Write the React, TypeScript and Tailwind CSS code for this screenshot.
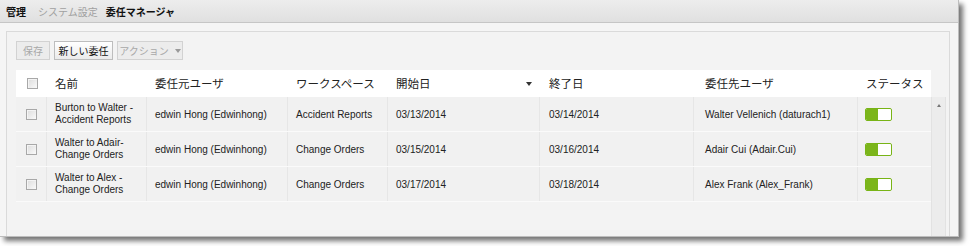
import React from 'react';

type Row = {
  name: [string, string];
  from: string;
  workspace: string;
  start: string;
  end: string;
  to: string;
};

const rows: Row[] = [
  {
    name: ['Burton to Walter -', 'Accident Reports'],
    from: 'edwin Hong (Edwinhong)',
    workspace: 'Accident Reports',
    start: '03/13/2014',
    end: '03/14/2014',
    to: 'Walter Vellenich (daturach1)',
  },
  {
    name: ['Walter to Adair-', 'Change Orders'],
    from: 'edwin Hong (Edwinhong)',
    workspace: 'Change Orders',
    start: '03/15/2014',
    end: '03/16/2014',
    to: 'Adair Cui (Adair.Cui)',
  },
  {
    name: ['Walter to Alex -', 'Change Orders'],
    from: 'edwin Hong (Edwinhong)',
    workspace: 'Change Orders',
    start: '03/17/2014',
    end: '03/18/2014',
    to: 'Alex Frank (Alex_Frank)',
  },
];

const jp = "font-['Noto_Sans_CJK_JP','Liberation_Sans',sans-serif]";
const latin = "font-['Liberation_Sans','Noto_Sans_CJK_JP',sans-serif]";

const Checkbox = () => (
  <div className="w-[11px] h-[11px] border border-[#a8a8a8] bg-gradient-to-br from-[#dcdcdc] to-[#fafafa] shadow-[inset_1px_1px_0_#f4f4f4]" />
);

const Toggle = () => (
  <div className="flex w-[27px] h-[13px] border border-[#78b416] rounded-[2px] overflow-hidden bg-white">
    <div className="w-[12px] h-full bg-[#7bb51b]" />
    <div className="flex-1 h-full bg-white rounded-[2px]" />
  </div>
);

// cell widths in px
const cols = ['w-[31px]', 'w-[100px]', 'w-[141px]', 'w-[100px]', 'w-[152px]', 'w-[154px]', 'w-[164px]', 'w-[73px]'];

const App: React.FC = () => {
  return (
    <div className="w-[971px] h-[246px] bg-white">
      <div className="w-[959px] h-[237px] flex flex-col bg-[#f5f5f5] border-r border-b border-[#bdbdbd] shadow-[4px_4px_5px_rgba(0,0,0,0.55)]">
        {/* Breadcrumb bar */}
        <div className={`h-[23px] shrink-0 flex items-center pl-[6px] bg-gradient-to-b from-[#ededed] to-[#e0e0e0] border-b border-[#c6c6c6] text-[10px] ${jp}`}>
          <span className="font-bold text-[#111]">管理</span>
          <span className="ml-[12px] text-[#a0a0a0]">システム設定</span>
          <span className="ml-[8px] font-bold text-[#111]">委任マネージャ</span>
        </div>

        {/* Panel */}
        <div className="flex-1 pt-[8px] pl-[6px] pr-[8px]">
          <div className="h-full border-l border-t border-r border-[#dadada] bg-[#f3f3f3] pl-[9px] pt-[9px] flex flex-col">
            {/* Toolbar */}
            <div className={`flex gap-[4px] h-[19px] text-[10px] whitespace-nowrap ${jp}`}>
              <button className="w-[34px] h-full border border-[#d2d2d2] bg-[#ececec] text-[#a8a8a8]">保存</button>
              <button className="w-[59px] h-full border border-[#bdbdbd] bg-gradient-to-b from-white to-[#ebebeb] text-[#111]">新しい委任</button>
              <button className="w-[66px] h-full border border-[#d2d2d2] bg-[#ececec] text-[#a8a8a8] flex items-center justify-center gap-[6px]">
                アクション
                <span className="w-0 h-0 border-l-[3px] border-r-[3px] border-t-[4px] border-l-transparent border-r-transparent border-t-[#9a9a9a]" />
              </button>
            </div>

            {/* Table + scrollbar */}
            <div className="mt-[10px] flex flex-1">
              <div className="w-[915px] flex flex-col">
                {/* Header */}
                <div className={`h-[27px] flex items-center bg-white text-[11.5px] text-[#222] ${jp}`}>
                  <div className={`${cols[0]} flex justify-center pl-[1px]`}><Checkbox /></div>
                  <div className={`${cols[1]} pl-[8px]`}>名前</div>
                  <div className={`${cols[2]} pl-[8px]`}>委任元ユーザ</div>
                  <div className={`${cols[3]} pl-[8px]`}>ワークスペース</div>
                  <div className={`${cols[4]} pl-[8px] pr-[8px] flex items-center justify-between`}>
                    <span>開始日</span>
                    <span className="w-0 h-0 border-l-[3px] border-r-[3px] border-t-[4px] border-l-transparent border-r-transparent border-t-[#333]" />
                  </div>
                  <div className={`${cols[5]} pl-[9px]`}>終了日</div>
                  <div className={`${cols[6]} pl-[11px]`}>委任先ユーザ</div>
                  <div className={`${cols[7]} pl-[8px]`}>ステータス</div>
                </div>

                {/* Rows */}
                {rows.map((r) => (
                  <div key={r.start} className={`h-[35px] flex bg-[#f1f1f1] border-b border-[#fafafa] text-[10px] text-[#222] ${latin}`}>
                    <div className={`${cols[0]} flex items-center justify-center pl-[1px] border-r border-[#e6e6e6]`}><Checkbox /></div>
                    <div className={`${cols[1]} pl-[8px] flex flex-col justify-center leading-[12px] border-r border-[#e6e6e6]`}>
                      <span>{r.name[0]}</span>
                      <span>{r.name[1]}</span>
                    </div>
                    <div className={`${cols[2]} pl-[8px] flex items-center border-r border-[#e6e6e6]`}>{r.from}</div>
                    <div className={`${cols[3]} pl-[8px] flex items-center border-r border-[#e6e6e6]`}>{r.workspace}</div>
                    <div className={`${cols[4]} pl-[8px] flex items-center border-r border-[#e6e6e6]`}>{r.start}</div>
                    <div className={`${cols[5]} pl-[9px] flex items-center border-r border-[#e6e6e6]`}>{r.end}</div>
                    <div className={`${cols[6]} pl-[11px] flex items-center border-r border-[#e6e6e6]`}>{r.to}</div>
                    <div className={`${cols[7]} pl-[7px] flex items-center`}><Toggle /></div>
                  </div>
                ))}
              </div>

              {/* Scrollbar */}
              <div className="w-[15px] mt-[27px] bg-[#ececec] border-l border-r border-[#e2e2e2] flex justify-center pt-[7px]">
                <span className="w-0 h-0 border-l-[2px] border-r-[2px] border-b-[3px] border-l-transparent border-r-transparent border-b-[#777]" />
              </div>
            </div>
          </div>
        </div>
      </div>
    </div>
  );
};

export default App;
